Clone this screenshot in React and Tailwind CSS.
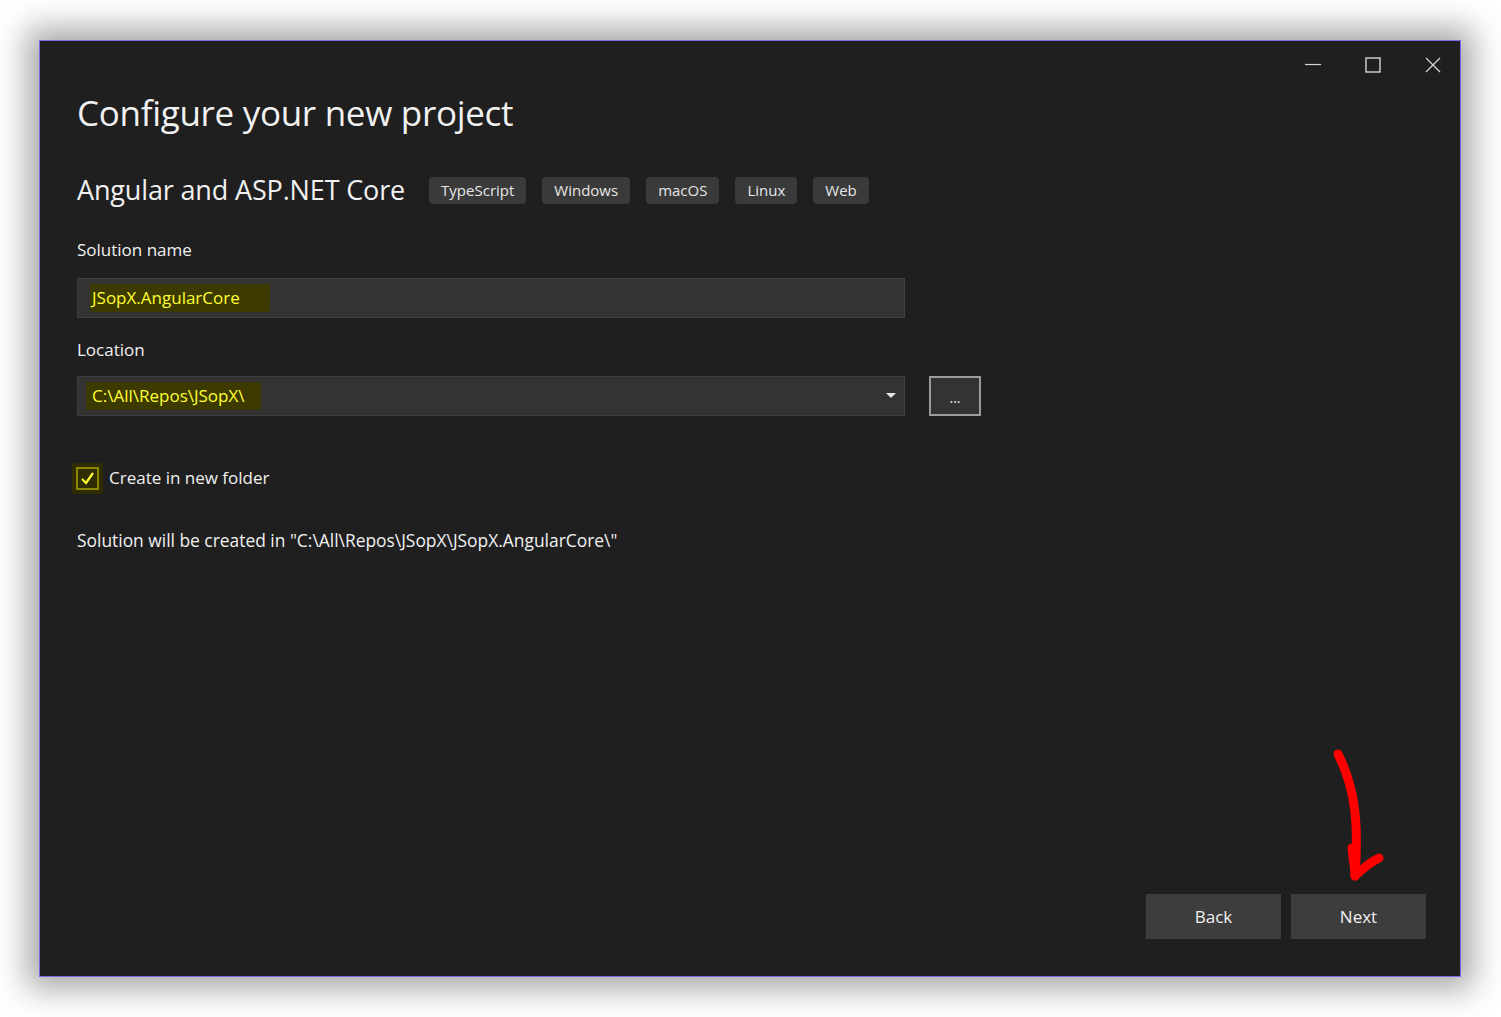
import React from 'react';

const tags = ['TypeScript', 'Windows', 'macOS', 'Linux', 'Web'];

function WindowControls() {
  return (
    <div className="absolute top-[4px] right-[-3px] flex items-center text-[#d6d6d6]">
      <button className="w-[60px] h-[40px] flex items-center justify-center">
        <svg width="18" height="18" viewBox="0 0 18 18"><path d="M1 8.5h16" stroke="currentColor" strokeWidth="1.2" /></svg>
      </button>
      <button className="w-[60px] h-[40px] flex items-center justify-center">
        <svg width="18" height="18" viewBox="0 0 18 18"><rect x="2" y="2" width="14" height="14" fill="none" stroke="currentColor" strokeWidth="1.4" /></svg>
      </button>
      <button className="w-[60px] h-[40px] flex items-center justify-center">
        <svg width="18" height="18" viewBox="0 0 18 18"><path d="M2 2l14 14M16 2L2 16" stroke="currentColor" strokeWidth="1.3" /></svg>
      </button>
    </div>
  );
}

function RedArrow() {
  // hand drawn annotation pointing at Next
  return (
    <svg className="absolute right-[66px] bottom-[88px]" width="70" height="150" viewBox="0 0 70 150">
      <path d="M14 16 C31 50 35 84 31 138" fill="none" stroke="#ff0000" strokeWidth="9" strokeLinecap="round" />
      <path d="M28 110 C29 122 31 130 31 138 C39 130 47 124 55 120" fill="none" stroke="#ff0000" strokeWidth="9" strokeLinecap="round" strokeLinejoin="round" />
    </svg>
  );
}

export default function App() {
  return (
    <div className="min-h-screen bg-white pt-[40px] pl-[39px]" style={{ fontFamily: '"Open Sans", "Noto Sans", sans-serif' }}>
      <div className="relative w-[1422px] h-[937px] bg-[#1f1f1f] border border-[#7b68ee] shadow-[0_0_30px_12px_rgba(0,0,0,0.35)] flex flex-col pl-[37px] pr-[34px] pb-[37px] text-[#f1f1f1]">
        <WindowControls />

        <h1 className="mt-[48px] text-[35px] leading-[48px] font-normal tracking-[-0.3px]">Configure your new project</h1>

        <div className="mt-[39px] flex items-center h-[28px]">
          <h2 className="text-[27px] leading-[28px] tracking-[-0.15px] mr-[24px]">Angular and ASP.NET Core</h2>
          <div className="flex gap-[16px]">
            {tags.map((t) => (
              <span key={t} className="h-[27px] px-[12px] flex items-center rounded-[4px] bg-[#3a3a3a] text-[15px] text-[#e6e6e6]">{t}</span>
            ))}
          </div>
        </div>

        <label className="mt-[34px] text-[17px] leading-[24px]">Solution name</label>
        <div className="mt-[16px] w-[828px] h-[40px] bg-[#333333] border border-[#3f3f3f] flex items-center pl-[12px]">
          <span className="bg-[#3d3a00] text-[#ffff33] text-[17px] leading-[28px] pl-[2px] pr-[30px] rounded-[2px]">JSopX.AngularCore</span>
        </div>

        <label className="mt-[20px] text-[17px] leading-[24px]">Location</label>
        <div className="mt-[14px] flex items-center gap-[24px]">
          <div className="w-[828px] h-[40px] bg-[#333333] border border-[#3f3f3f] flex items-center pl-[8px] pr-[8px]">
            <span className="bg-[#3d3a00] text-[#ffff33] text-[17px] leading-[28px] pl-[6px] pr-[16px] rounded-[2px]">C:\All\Repos\JSopX\</span>
            <svg className="ml-auto" width="10" height="6" viewBox="0 0 10 6"><path d="M0 0h10L5 5z" fill="#e6e6e6" /></svg>
          </div>
          <button className="w-[52px] h-[40px] bg-[#333333] border-2 border-[#9b9b9b] text-[#f1f1f1] text-[14px] leading-none pt-[4px]">...</button>
        </div>

        <div className="mt-[50px] flex items-center h-[24px]">
          <span className="bg-[#2e2c00] p-[4px] -ml-[5px] mr-[6px] rounded-[2px]">
            <span className="w-[23px] h-[23px] border-2 border-[#8a8600] flex items-center justify-center">
              <svg width="15" height="13" viewBox="0 0 15 13"><path d="M2 7l4 4 7-10" fill="none" stroke="#ffff33" strokeWidth="2.2" /></svg>
            </span>
          </span>
          <span className="text-[17px] leading-[24px]">Create in new folder</span>
        </div>

        <p className="mt-[38px] text-[17.4px] leading-[24px]">Solution will be created in "C:\All\Repos\JSopX\JSopX.AngularCore\"</p>

        <div className="mt-auto flex justify-end gap-[10px]">
          <button className="w-[135px] h-[45px] bg-[#3d3d3d] text-[17px] text-[#f1f1f1]">Back</button>
          <button className="w-[135px] h-[45px] bg-[#3d3d3d] text-[17px] text-[#f1f1f1]">Next</button>
        </div>

        <RedArrow />
      </div>
    </div>
  );
}
